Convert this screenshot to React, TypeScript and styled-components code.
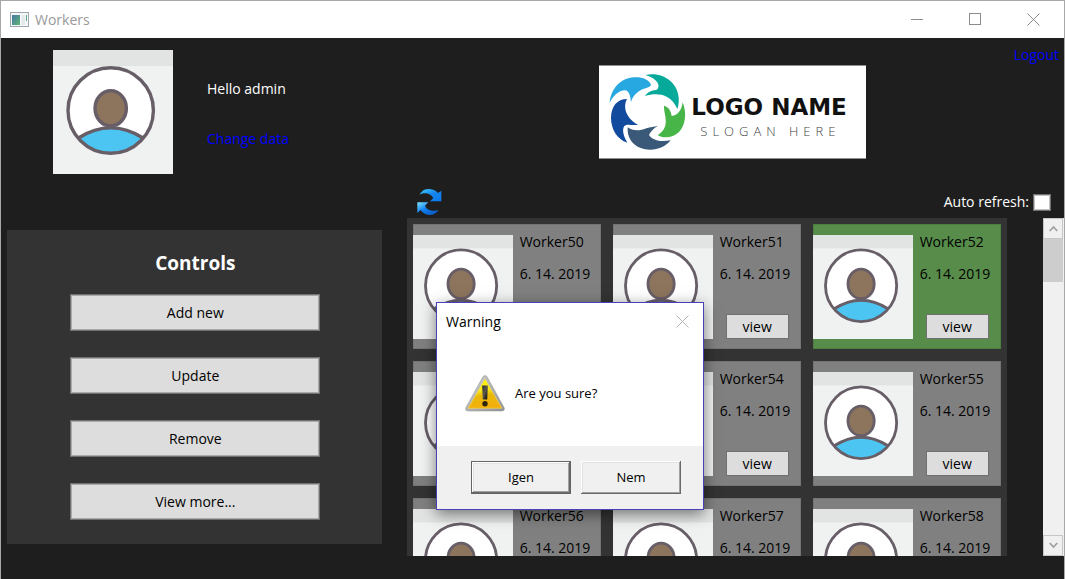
import React from "react";
import styled, { createGlobalStyle } from "styled-components";

const GlobalStyle = createGlobalStyle`
  *, *::before, *::after { box-sizing: border-box; }
  html, body { margin: 0; }
  body {
    background: #1e1e1e;
    font-family: "Open Sans", "Noto Sans", sans-serif;
    font-size: 14px;
    line-height: 20px;
    overflow: hidden;
  }
  button, input { font: inherit; }
`;

const AppWindow = styled.div`
  position: relative;
  display: flex;
  flex-direction: column;
  min-height: 100vh;
  border: 1px solid #a8a8a8;
  border-bottom: 0;
  background: #1e1e1e;
`;

const TitleBar = styled.header`
  display: flex;
  align-items: center;
  height: 37px;
  padding: 0 2px 0 9px;
  background: #fff;
  color: #999;
`;

const WindowTitle = styled.h1`
  flex: 1;
  margin: 0 0 0 6px;
  font-size: 14px;
  font-weight: 400;
`;

const CaptionButton = styled.button`
  display: grid;
  place-items: center;
  width: 58px;
  height: 37px;
  padding: 0;
  border: 0;
  background: none;
  color: #8c8c8c;
`;

const Columns = styled.main`
  display: grid;
  grid-template-columns: 3fr 5fr;
`;

const SideColumn = styled.section`
  display: flex;
  flex-direction: column;
  padding: 12px 18px 0 6px;
`;

const Profile = styled.div`
  display: flex;
  align-items: flex-start;
  gap: 34px;
  height: 180px;
  padding-left: 46px;
`;

const ProfileText = styled.div`
  display: flex;
  flex-direction: column;
  align-items: flex-start;
  gap: 30px;
  padding-top: 29px;
  color: #fff;
`;

const Link = styled.a`
  color: #00f;
  text-decoration: none;
`;

const ControlsPanel = styled.div`
  display: flex;
  flex-direction: column;
  align-items: center;
  gap: 26px;
  padding: 20px 20px 24px 22px;
  background: #333;
`;

const PanelTitle = styled.h2`
  margin: 0 0 -8px;
  color: #fff;
  font-size: 19px;
  line-height: 26px;
`;

const ControlButton = styled.button`
  width: 100%;
  max-width: 250px;
  height: 37px;
  padding: 0;
  border: 1px solid #707070;
  background: #ddd;
  box-shadow: inset 0 0 0 1px #aaa;
  color: #000;
`;

const MainColumn = styled.section`
  display: flex;
  flex-direction: column;
  padding-left: 7px;
`;

const Banner = styled.div`
  display: grid;
  grid-template-columns: 1fr auto 1fr;
  align-items: start;
  height: 148px;
  padding-right: 5px;

  & > a {
    grid-column: 3;
    justify-self: end;
    margin-top: 7px;
  }
`;

const Logo = styled.div`
  grid-column: 2;
  display: flex;
  width: 267px;
  height: 94px;
  margin-top: 27px;
  padding: 2px 0 0 6px;
  border: 1px solid #909090;
  border-width: 1px 0;
  background: #fff;
`;

const LogoWords = styled.div`
  display: flex;
  flex-direction: column;
  color: #111;
  white-space: nowrap;
`;

const LogoName = styled.span`
  padding-top: 25px;
  font-family: "DejaVu Sans", sans-serif;
  font-size: 23px;
  font-weight: 700;
  line-height: 28px;
`;

const Slogan = styled.span`
  padding-left: 9px;
  color: #444;
  font-size: 13px;
  font-weight: 300;
  letter-spacing: 5px;
  line-height: 20px;
`;

const Toolbar = styled.div`
  display: flex;
  align-items: center;
  justify-content: space-between;
  height: 32px;
  padding: 0 13px 0 9px;
  color: #fff;
`;

const RefreshButton = styled.button`
  display: block;
  padding: 0;
  border: 0;
  background: none;
  line-height: 0;
`;

const AutoRefresh = styled.label`
  display: flex;
  align-items: center;
  gap: 4px;
`;

const CheckBox = styled.input`
  appearance: none;
  width: 18px;
  height: 17px;
  margin: 0;
  border: 1px solid #707070;
  background: #fff;
  box-shadow: inset 0 0 0 1px #c4c4c4;
`;

const ListArea = styled.div`
  display: flex;
  justify-content: space-between;
  height: 338px;
`;

const WorkerGrid = styled.ul`
  display: grid;
  grid-template-columns: repeat(3, 188px);
  grid-auto-rows: 125px;
  gap: 12px;
  margin: 0;
  padding: 6px;
  background: #333;
  list-style: none;
  overflow: hidden;
`;

const WorkerCard = styled.li<{ $active?: boolean }>`
  display: flex;
  align-items: flex-start;
  padding-top: 8px;
  background: ${(p) => (p.$active ? "#578c4a" : "#808080")};
  box-shadow: inset 0 0 0 1px ${(p) => (p.$active ? "#4c8040" : "#747474")};

  & > svg {
    flex: none;
    margin-top: 3px;
  }
`;

const WorkerInfo = styled.div`
  display: flex;
  flex-direction: column;
  gap: 12px;
  padding-left: 7px;
  color: #000;
  white-space: nowrap;
`;

const ViewButton = styled.button`
  width: 63px;
  height: 25px;
  margin: 18px 0 0 6px;
  padding: 0;
  border: 1px solid #707070;
  background: #ddd;
  color: #000;
  line-height: 20px;
`;

const ScrollBar = styled.div`
  display: flex;
  flex-direction: column;
  width: 21px;
  padding-right: 1px;
  background: #f0f0f0;
`;

const ScrollArrow = styled.button`
  display: grid;
  place-items: center;
  height: 21px;
  padding: 0;
  border: 1px solid #c6c6c6;
  background: #f0f0f0;
`;

const ScrollTrack = styled.div`
  flex: 1;
`;

const ScrollThumb = styled.div`
  height: 43px;
  background: #cdcdcd;
`;

const Dialog = styled.div`
  position: absolute;
  top: 301px;
  left: 435px;
  display: flex;
  flex-direction: column;
  width: 268px;
  border: 1px solid #4a40b8;
  background: #fff;
  box-shadow: 0 4px 14px rgba(0, 0, 0, 0.5);
  color: #000;
`;

const DialogHeader = styled.div`
  display: flex;
  align-items: center;
  justify-content: space-between;
  height: 37px;
  padding: 0 14px 0 9px;
`;

const DialogTitle = styled.h2`
  margin: 0;
  font-size: 14px;
  font-weight: 400;
`;

const CloseButton = styled.button`
  display: block;
  padding: 0;
  border: 0;
  background: none;
  color: #b4b4b4;
  line-height: 0;
`;

const DialogBody = styled.div`
  display: flex;
  align-items: center;
  gap: 10px;
  height: 106px;
  padding-left: 28px;
  font-size: 13px;

  & > p { margin: 0; }
`;

const DialogFooter = styled.div`
  display: flex;
  justify-content: flex-end;
  gap: 10px;
  padding: 15px 22px 15px;
  background: #f0f0f0;
  font-size: 13px;
`;

const DialogButton = styled.button<{ $primary?: boolean }>`
  width: 100px;
  height: 33px;
  padding: 0 0 2px;
  border: ${(p) => (p.$primary ? "1px solid #646464" : "0")};
  background: #f0f0f0;
  color: #000;
  box-shadow: inset -1px -1px #696969, inset 1px 1px #fff, inset -2px -2px #a0a0a0, inset 2px 2px #e3e3e3;
`;

function Avatar({ width, height }: { width: number; height: number }) {
  return (
    <svg width={width} height={height} viewBox="0 0 120 124" preserveAspectRatio="none" aria-hidden="true">
      <rect width="120" height="124" fill="#f0f2f2" />
      <rect width="120" height="16" fill="#e2e4e4" />
      <circle cx="57.7" cy="60.5" r="42.7" fill="#fff" />
      <path d="M25.5 88 Q57.7 67.5 90 88 A42.7 42.7 0 0 1 25.5 88Z" fill="#4cc5f2" />
      <g fill="none" stroke="#685e68" strokeWidth="3.4">
        <path d="M25.5 88 Q57.7 67.5 90 88" />
        <circle cx="57.7" cy="60.5" r="42.7" />
        <ellipse cx="57.7" cy="58.3" rx="15.7" ry="17.6" fill="#8d745c" />
      </g>
    </svg>
  );
}

function AppIcon() {
  return (
    <svg width="19" height="16" viewBox="0 0 19 16" aria-hidden="true">
      <defs>
        <linearGradient id="screen" x1="0" y1="0" x2="1" y2="1">
          <stop offset="0" stopColor="#4377a8" />
          <stop offset="1" stopColor="#63b574" />
        </linearGradient>
      </defs>
      <rect x="0.5" y="0.5" width="18" height="14" fill="#f5f7f8" stroke="#9ea7ab" />
      <rect x="2" y="3" width="8" height="10" fill="url(#screen)" />
      <rect x="11.5" y="3" width="3.5" height="10" fill="#e4e9eb" />
      <rect x="16" y="3" width="1" height="6" fill="#5da48a" />
    </svg>
  );
}

function Emblem() {
  return (
    <svg width="86" height="88" viewBox="0 0 258 264" aria-hidden="true">
      <path fill="#28a8e0" d="M14 105C18 58 50 28 92 28C116 28 132 36 138 50C136 58 126 58 112 64C94 73 82 86 78 103C76 82 72 71 62 67C42 66 24 84 14 105Z" />
      <path fill="#06a99a" d="M121 21C172 9 218 43 221 88C222 101 221 112 217 123C211 108 200 94 185 86C165 76 142 77 120 84C126 74 138 67 154 66C169 57 159 31 121 21Z" />
      <path fill="#48b549" d="M233 103C252 150 234 207 184 208C172 208 164 206 158 201C178 190 184 172 182 154C182 142 176 128 177 113C190 117 198 127 200 144C218 142 230 127 233 103Z" />
      <path fill="#3a5878" d="M68 178C82 189 102 190 124 181C136 177 147 176 159 174C145 181 138 190 132 201C143 218 168 222 197 217C174 246 132 253 98 236C78 225 66 204 68 178Z" />
      <path fill="#124a9e" d="M66 93C36 93 19 115 18 149C18 184 37 214 67 224C56 205 50 186 58 174C67 166 80 173 99 170C80 160 67 145 62 128C59 115 60 104 66 93Z" />
    </svg>
  );
}

function RefreshIcon() {
  return (
    <svg width="27" height="28" viewBox="0 0 81 84" aria-hidden="true">
      <defs>
        <linearGradient id="arrowTop" x1="0" y1="0" x2="1" y2="1">
          <stop offset="0" stopColor="#3fd0ff" />
          <stop offset="0.5" stopColor="#1684ec" />
          <stop offset="1" stopColor="#0a7af0" />
        </linearGradient>
        <linearGradient id="arrowBottom" x1="0" y1="0" x2="1" y2="1">
          <stop offset="0" stopColor="#7fe6ff" />
          <stop offset="0.45" stopColor="#0f7df0" />
          <stop offset="1" stopColor="#0a4fae" />
        </linearGradient>
      </defs>
      <path fill="url(#arrowTop)" d="M10 20C18 7 28 2 41 3C52 4 61 8 66 15L76 8V40H42L52 30C43 17 30 11 10 20Z" />
      <path fill="url(#arrowBottom)" d="M4 43H37L27 53C33 66 47 71 68 66C60 77 50 82 40 81C29 80 20 75 14 66L4 75Z" />
    </svg>
  );
}

function WarningIcon() {
  return (
    <svg width="40" height="37" viewBox="0 0 40 37" aria-hidden="true">
      <defs>
        <linearGradient id="rim" x1="0" y1="0" x2="1" y2="1">
          <stop offset="0" stopColor="#d4d4d4" />
          <stop offset="1" stopColor="#8c8f92" />
        </linearGradient>
        <linearGradient id="sign" x1="0" y1="0" x2="0.2" y2="1">
          <stop offset="0" stopColor="#fff600" />
          <stop offset="0.45" stopColor="#f8e81c" />
          <stop offset="0.62" stopColor="#e9b90c" />
          <stop offset="1" stopColor="#f3b00c" />
        </linearGradient>
        <linearGradient id="mark" x1="0" y1="0" x2="1" y2="1">
          <stop offset="0" stopColor="#222" />
          <stop offset="0.45" stopColor="#5a5a50" />
          <stop offset="1" stopColor="#050505" />
        </linearGradient>
      </defs>
      <path d="M18 1.6Q20 -0.5 22 1.6L39.3 33Q40 36 37 36H3Q0 36 0.7 33Z" fill="url(#rim)" stroke="#a0a0a0" strokeWidth="0.6" />
      <path d="M20 4L37 33.3H3Z" fill="url(#sign)" stroke="#f6dc62" strokeWidth="0.6" />
      <path d="M17.2 10.5H22.8L22.2 24.5H17.8Z" fill="url(#mark)" />
      <circle cx="20" cy="28.7" r="2.7" fill="#2c260c" />
    </svg>
  );
}

function Cross({ size }: { size: number }) {
  return (
    <svg width={size} height={size} viewBox="0 0 13 13" aria-hidden="true">
      <path d="M0.5 0.5L12.5 12.5M12.5 0.5L0.5 12.5" stroke="currentColor" fill="none" />
    </svg>
  );
}

function Chevron({ down }: { down?: boolean }) {
  return (
    <svg width="9" height="7" viewBox="0 0 9 7" aria-hidden="true">
      <path d={down ? "M0.7 1L4.5 5L8.3 1" : "M0.7 6L4.5 2L8.3 6"} fill="none" stroke="#a0a0a0" strokeWidth="1.8" />
    </svg>
  );
}

const controls = ["Add new", "Update", "Remove", "View more..."];
const workers = [50, 51, 52, 53, 54, 55, 56, 57, 58];
const activeWorker = 52;

export default function App() {
  return (
    <>
      <GlobalStyle />
      <AppWindow>
        <TitleBar>
          <AppIcon />
          <WindowTitle>Workers</WindowTitle>
          <CaptionButton aria-label="Minimize">
            <svg width="13" height="13" viewBox="0 0 13 13"><path d="M0 6.5H12" stroke="currentColor" /></svg>
          </CaptionButton>
          <CaptionButton aria-label="Maximize">
            <svg width="13" height="13" viewBox="0 0 13 13"><rect x="0.5" y="0.5" width="11" height="11" fill="none" stroke="currentColor" /></svg>
          </CaptionButton>
          <CaptionButton aria-label="Close"><Cross size={13} /></CaptionButton>
        </TitleBar>

        <Columns>
          <SideColumn>
            <Profile>
              <Avatar width={120} height={124} />
              <ProfileText>
                <span>Hello admin</span>
                <Link href="#profile">Change data</Link>
              </ProfileText>
            </Profile>
            <ControlsPanel>
              <PanelTitle>Controls</PanelTitle>
              {controls.map((label) => (
                <ControlButton key={label}>{label}</ControlButton>
              ))}
            </ControlsPanel>
          </SideColumn>

          <MainColumn>
            <Banner>
              <Logo>
                <Emblem />
                <LogoWords>
                  <LogoName>LOGO NAME</LogoName>
                  <Slogan>SLOGAN HERE</Slogan>
                </LogoWords>
              </Logo>
              <Link href="#logout">Logout</Link>
            </Banner>
            <Toolbar>
              <RefreshButton aria-label="Refresh"><RefreshIcon /></RefreshButton>
              <AutoRefresh>
                Auto refresh:
                <CheckBox type="checkbox" />
              </AutoRefresh>
            </Toolbar>
            <ListArea>
              <WorkerGrid>
                {workers.map((id) => (
                  <WorkerCard key={id} $active={id === activeWorker}>
                    <Avatar width={100} height={104} />
                    <WorkerInfo>
                      <span>Worker{id}</span>
                      <span>6. 14. 2019</span>
                      <ViewButton>view</ViewButton>
                    </WorkerInfo>
                  </WorkerCard>
                ))}
              </WorkerGrid>
              <ScrollBar>
                <ScrollArrow aria-label="Scroll up"><Chevron /></ScrollArrow>
                <ScrollTrack><ScrollThumb /></ScrollTrack>
                <ScrollArrow aria-label="Scroll down"><Chevron down /></ScrollArrow>
              </ScrollBar>
            </ListArea>
          </MainColumn>
        </Columns>

        <Dialog role="dialog" aria-labelledby="dialog-title">
          <DialogHeader>
            <DialogTitle id="dialog-title">Warning</DialogTitle>
            <CloseButton aria-label="Close dialog"><Cross size={13} /></CloseButton>
          </DialogHeader>
          <DialogBody>
            <WarningIcon />
            <p>Are you sure?</p>
          </DialogBody>
          <DialogFooter>
            <DialogButton $primary>Igen</DialogButton>
            <DialogButton>Nem</DialogButton>
          </DialogFooter>
        </Dialog>
      </AppWindow>
    </>
  );
}
